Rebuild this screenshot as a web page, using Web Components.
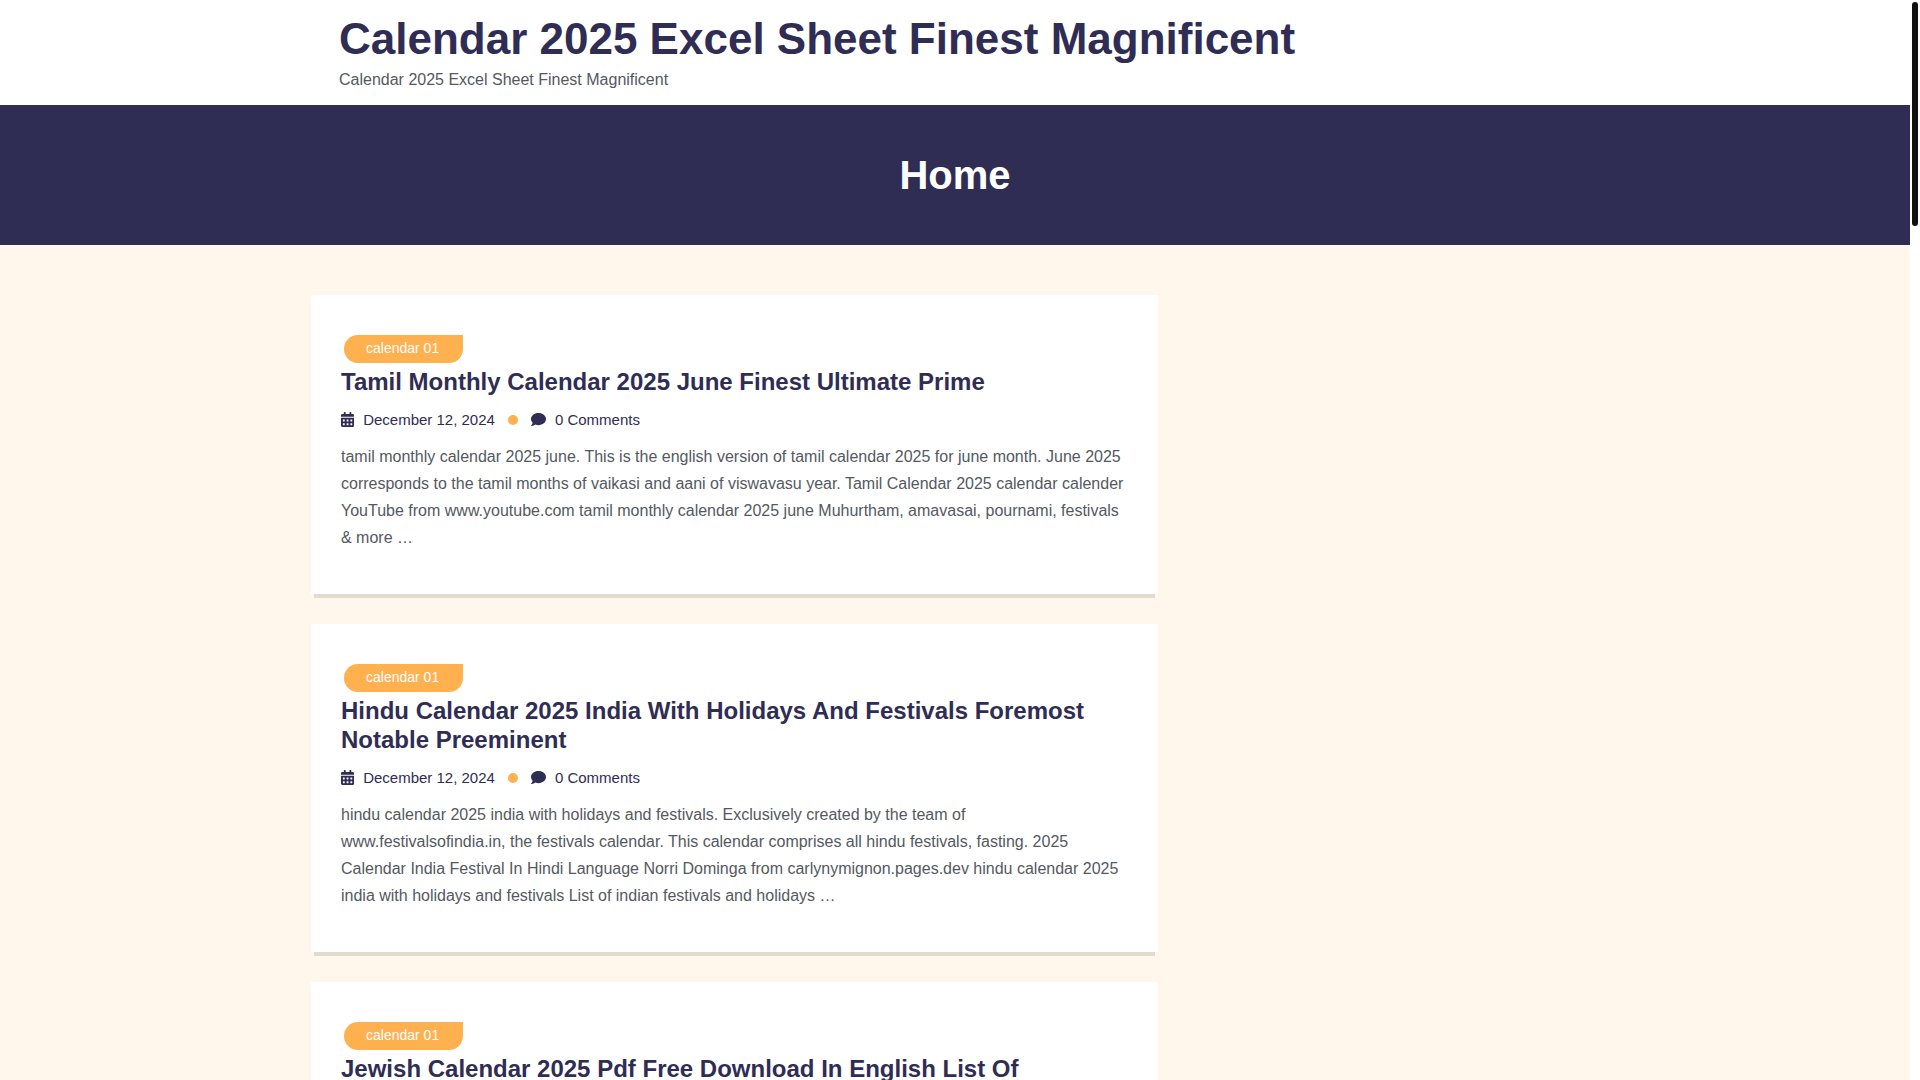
<!DOCTYPE html>
<html lang="en">
<head>
<meta charset="utf-8">
<title>Calendar 2025 Excel Sheet Finest Magnificent</title>
<style>
  :root { --navy: #302d55; --accent: #ffb04f; --cream: #fff6ec; --text: #54595f; }
  body { margin: 0; font: 16px/27px "Liberation Sans", Arial, sans-serif; color: var(--text); background: #fff; }
</style>
</head>
<body>
<blog-page>
  <site-header slot="header">
    <span slot="title">Calendar 2025 Excel Sheet Finest Magnificent</span>
    <span slot="tagline">Calendar 2025 Excel Sheet Finest Magnificent</span>
  </site-header>
  <page-banner slot="header">Home</page-banner>
  <post-card>
    <span slot="category">calendar 01</span>
    <span slot="title">Tamil Monthly Calendar 2025 June Finest Ultimate Prime</span>
    <span slot="date">December 12, 2024</span>
    <span slot="comments">0 Comments</span>
    tamil monthly calendar 2025 june. This is the english version of tamil calendar 2025 for june month. June 2025 corresponds to the tamil months of vaikasi and aani of viswavasu year. Tamil Calendar 2025 calendar calender YouTube from www.youtube.com tamil monthly calendar 2025 june Muhurtham, amavasai, pournami, festivals &amp; more …
  </post-card>
  <post-card>
    <span slot="category">calendar 01</span>
    <span slot="title">Hindu Calendar 2025 India With Holidays And Festivals Foremost Notable Preeminent</span>
    <span slot="date">December 12, 2024</span>
    <span slot="comments">0 Comments</span>
    hindu calendar 2025 india with holidays and festivals. Exclusively created by the team of www.festivalsofindia.in, the festivals calendar. This calendar comprises all hindu festivals, fasting. 2025 Calendar India Festival In Hindi Language Norri Dominga from carlynymignon.pages.dev hindu calendar 2025 india with holidays and festivals List of indian festivals and holidays …
  </post-card>
  <post-card>
    <span slot="category">calendar 01</span>
    <span slot="title">Jewish Calendar 2025 Pdf Free Download In English List Of</span>
  </post-card>
</blog-page>

<script>
class BaseElement extends HTMLElement {
  constructor() {
    super();
    this.attachShadow({ mode: "open" }).innerHTML =
      "<style>:host{display:block}a{color:inherit;text-decoration:none}" + this.constructor.css + "</style>" + this.constructor.html;
  }
}

customElements.define("blog-page", class extends BaseElement {
  static css = `
    :host { display: flex; height: 100vh; overflow: hidden; }
    .view { flex: 1; min-width: 0; overflow: hidden; background: var(--cream); }
    main { display: grid; grid-template-columns: minmax(0, 847fr) minmax(0, 441fr);
      max-width: 1288px; margin: 0 auto; padding: 50px 0; }
    .posts { display: flex; flex-direction: column; gap: 30px; }
  `;
  static html = `
    <div class="view">
      <slot name="header"></slot>
      <main><div class="posts"><slot></slot></div></main>
    </div>
    <scroll-rail></scroll-rail>`;
});

customElements.define("scroll-rail", class extends BaseElement {
  static css = `
    :host { box-sizing: border-box; width: 10px; padding: 2px; background: #fff; }
    div { height: 224px; width: 6px; border-radius: 3px; background: #111; }
  `;
  static html = `<div></div>`;
});

customElements.define("site-header", class extends BaseElement {
  static css = `
    :host { background: #fff; }
    header { max-width: 1232px; margin: 0 auto; padding: 11px 0 12px; }
    h1 { margin: 0; font-size: 44px; line-height: 55px; color: var(--navy); }
    p { margin: 0; }
  `;
  static html = `<header><h1><a href="#"><slot name="title"></slot></a></h1><p><slot name="tagline"></slot></p></header>`;
});

customElements.define("page-banner", class extends BaseElement {
  static css = `
    :host { background: var(--navy); padding: 46px 0; }
    h2 { margin: 0; font-size: 40px; line-height: 48px; color: #fff; text-align: center; }
  `;
  static html = `<h2><slot></slot></h2>`;
});

customElements.define("post-card", class extends BaseElement {
  static css = `
    :host { background: #fff; padding: 40px 30px 43px; box-shadow: 0 7px 0 -3px #e3dacf; }
    .badge { display: block; width: fit-content; margin: 0 3px 4px; padding: 0 24px 2px 22px; font-size: 14px;
      line-height: 26px; color: #fff; background: var(--accent); border-radius: 14px 0 14px 14px; }
    h2 { margin: 0; font-size: 24px; line-height: 29px; color: var(--navy); }
    .meta { display: flex; align-items: center; gap: 13px; margin: 10px 0; font-size: 15px; color: var(--navy); }
    .meta a { display: flex; align-items: center; gap: 9px; }
    svg { height: 15px; fill: currentColor; }
    i { width: 10px; height: 10px; border-radius: 50%; background: var(--accent); }
    p { margin: 0; }
  `;
  static html = `
    <a class="badge" href="#"><slot name="category"></slot></a>
    <h2><a href="#"><slot name="title"></slot></a></h2>
    <div class="meta">
      <a href="#">
        <svg viewBox="0 0 448 512" aria-hidden="true"><path d="M0 192v272c0 26.500 21.500 48 48 48h352c26.500 0 48-21.500 48-48V192zM76 256h40q12 0 12 12v40q0 12-12 12H76q-12 0-12-12v-40q0-12 12-12zm128 0h40q12 0 12 12v40q0 12-12 12h-40q-12 0-12-12v-40q0-12 12-12zm128 0h40q12 0 12 12v40q0 12-12 12h-40q-12 0-12-12v-40q0-12 12-12zM76 384h40q12 0 12 12v40q0 12-12 12H76q-12 0-12-12v-40q0-12 12-12zm128 0h40q12 0 12 12v40q0 12-12 12h-40q-12 0-12-12v-40q0-12 12-12zm128 0h40q12 0 12 12v40q0 12-12 12h-40q-12 0-12-12v-40q0-12 12-12z" fill-rule="evenodd"/><path d="M400 64h-48V16c0-8.800-7.200-16-16-16h-32c-8.800 0-16 7.200-16 16v48H160V16c0-8.800-7.200-16-16-16h-32c-8.800 0-16 7.200-16 16v48H48C21.500 64 0 85.500 0 112v48h448v-48c0-26.500-21.500-48-48-48z"/></svg>
        <slot name="date"></slot>
      </a>
      <i></i>
      <a href="#">
        <svg viewBox="0 0 512 512" aria-hidden="true"><path d="M256 32C114.600 32 0 125.100 0 240c0 49.600 21.400 95 57 130.700C44.500 421.100 2.700 466 2.200 466.500c-2.200 2.300-2.800 5.700-1.500 8.700S4.800 480 8 480c66.300 0 116-31.800 140.600-51.400 32.700 12.300 69 19.400 107.400 19.400 141.400 0 256-93.100 256-208S397.400 32 256 32z"/></svg>
        <slot name="comments"></slot>
      </a>
    </div>
    <p><slot></slot></p>`;
});
</script>
</body>
</html>
